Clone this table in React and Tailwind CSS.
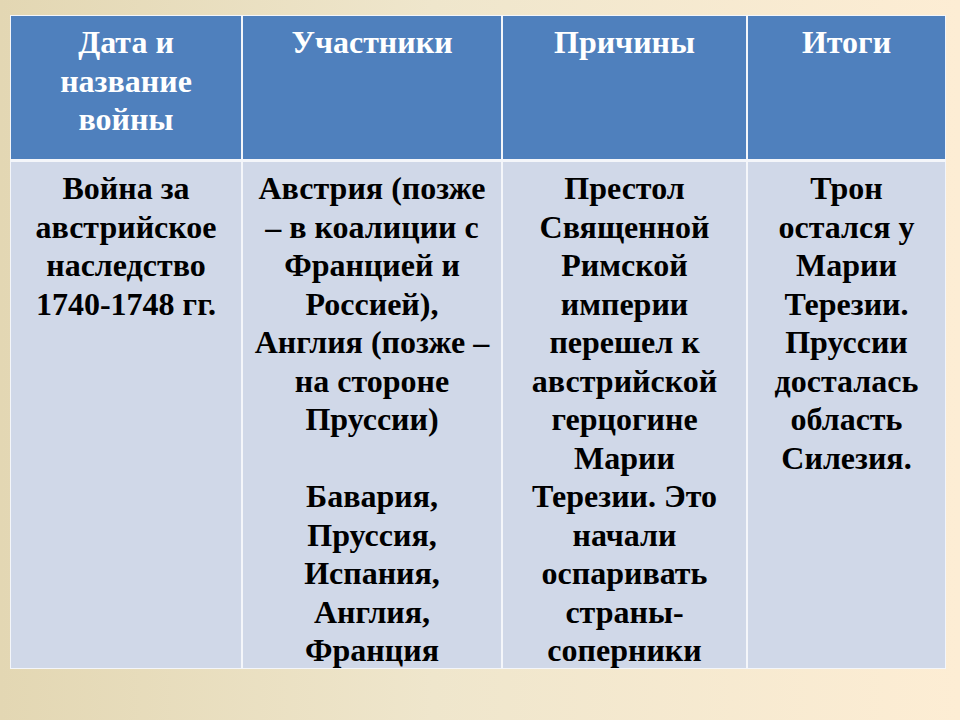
export default function App() {
  const font = { fontFamily: '"Liberation Serif", "Times New Roman", serif' };
  const Lines = ({ lines }) => (
    <>
      {lines.map((l, i) => (
        <div key={i} className="whitespace-nowrap h-[38.5px]">{l === "" ? "\u00a0" : l}</div>
      ))}
    </>
  );
  const head = [["Дата и", "название", "войны"], ["Участники"], ["Причины"], ["Итоги"]];
  const body = [
    ["Война за", "австрийское", "наследство", "1740-1748 гг."],
    ["Австрия (позже", "– в коалиции с", "Францией и", "Россией),", "Англия (позже –", "на стороне", "Пруссии)", "", "Бавария,", "Пруссия,", "Испания,", "Англия,", "Франция"],
    ["Престол", "Священной", "Римской", "империи", "перешел к", "австрийской", "герцогине", "Марии", "Терезии. Это", "начали", "оспаривать", "страны-", "соперники"],
    ["Трон", "остался у", "Марии", "Терезии.", "Пруссии", "досталась", "область", "Силезия."],
  ];
  return (
    <div
      className="w-[960px] h-[720px] overflow-hidden bg-[linear-gradient(90deg,#e3d7b3_0%,#efe6cc_45%,#fdedd4_100%)] pl-[10px] pt-[15px]"
      style={font}
    >
      <div className="w-[936px] border border-[#f4f6fa] bg-[#f4f6fa] grid grid-cols-[230px_258px_243px_197px] gap-x-[2px] gap-y-[3px] font-bold text-[32px] leading-[38.5px] text-center">
        {head.map((h, i) => (
          <div key={"h" + i} className="bg-[#4f80bd] text-white h-[143px] pt-[7px]">
            <Lines lines={h} />
          </div>
        ))}
        {body.map((b, i) => (
          <div key={"b" + i} className="bg-[#d0d8e8] text-black h-[506px] pt-[7px]">
            <Lines lines={b} />
          </div>
        ))}
      </div>
    </div>
  );
}
